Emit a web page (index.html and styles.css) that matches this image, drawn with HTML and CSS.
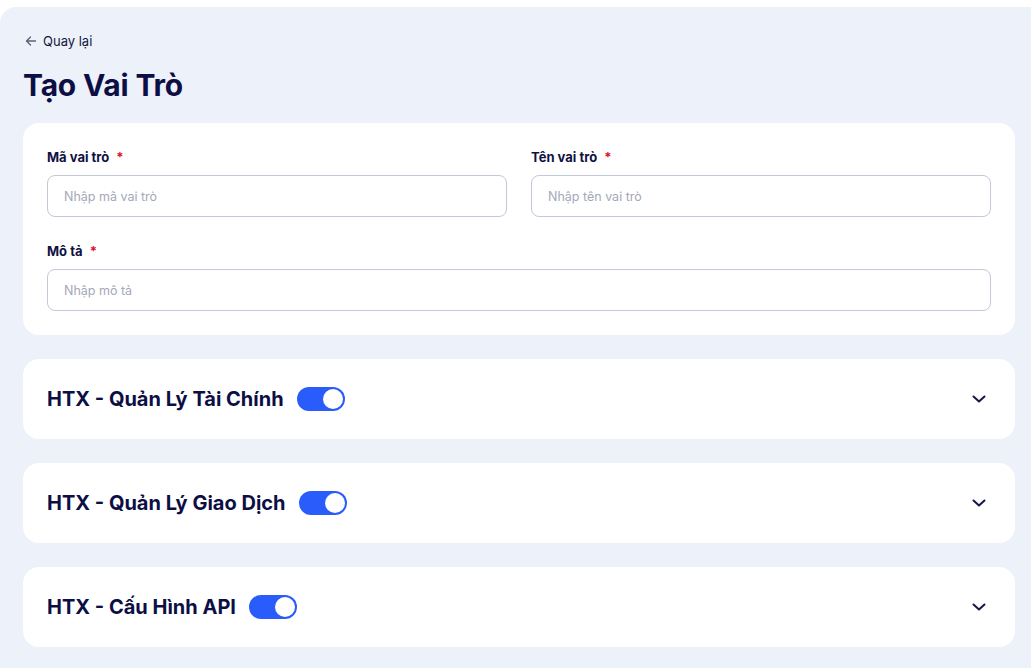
FILE: index.html
```html
<!DOCTYPE html>
<html lang="vi">
<head>
  <meta charset="UTF-8">
  <title>Tạo Vai Trò</title>
  <link rel="stylesheet" href="styles.css">
</head>
<body>

  <main class="panel">
    <!-- quay lại -->
    <a class="back-link" href="#">
      <svg width="12" height="12" viewBox="0 0 12 12" fill="none" stroke="#5b6078" stroke-width="1.3" stroke-linecap="round" stroke-linejoin="round">
        <path d="M10.5 6H1.5M5.5 2L1.5 6l4 4"/>
      </svg>
      <span>Quay lại</span>
    </a>

    <h1 class="page-title">Tạo Vai Trò</h1>

    <!-- thông tin vai trò -->
    <section class="card form-card">
      <div class="form-row">
        <div class="field">
          <label class="field-label">Mã vai trò <span class="req">*</span></label>
          <input class="field-input" type="text" placeholder="Nhập mã vai trò">
        </div>
        <div class="field">
          <label class="field-label">Tên vai trò <span class="req">*</span></label>
          <input class="field-input" type="text" placeholder="Nhập tên vai trò">
        </div>
      </div>
      <div class="field">
        <label class="field-label">Mô tả <span class="req">*</span></label>
        <input class="field-input" type="text" placeholder="Nhập mô tả">
      </div>
    </section>

    <!-- nhóm quyền -->
    <section class="card group-card">
      <div class="group-title">
        <h2>HTX - Quản Lý Tài Chính</h2>
        <span class="toggle on"><span class="knob"></span></span>
      </div>
      <svg class="chevron" width="16" height="16" viewBox="0 0 16 16" fill="none" stroke="#13164a" stroke-width="2" stroke-linecap="round" stroke-linejoin="round">
        <path d="M2.5 5.5L8 10.5l5.5-5"/>
      </svg>
    </section>

    <section class="card group-card">
      <div class="group-title">
        <h2>HTX - Quản Lý Giao Dịch</h2>
        <span class="toggle on"><span class="knob"></span></span>
      </div>
      <svg class="chevron" width="16" height="16" viewBox="0 0 16 16" fill="none" stroke="#13164a" stroke-width="2" stroke-linecap="round" stroke-linejoin="round">
        <path d="M2.5 5.5L8 10.5l5.5-5"/>
      </svg>
    </section>

    <section class="card group-card">
      <div class="group-title">
        <h2>HTX - Cấu Hình API</h2>
        <span class="toggle on"><span class="knob"></span></span>
      </div>
      <svg class="chevron" width="16" height="16" viewBox="0 0 16 16" fill="none" stroke="#13164a" stroke-width="2" stroke-linecap="round" stroke-linejoin="round">
        <path d="M2.5 5.5L8 10.5l5.5-5"/>
      </svg>
    </section>
  </main>

</body>
</html>
```

FILE: styles.css
```css
* {
  box-sizing: border-box;
}

body {
  margin: 0;
  padding-top: 7px;
  background: #ffffff;
  font-family: Inter, 'Noto Sans', sans-serif;
  color: #0f1142;
}

.panel {
  background: #edf1f9;
  border-radius: 16px 0 0 0;
  padding: 24px 16px 24px 23px;
  min-height: 661px;
}

.back-link {
  display: inline-flex;
  align-items: center;
  gap: 6px;
  margin-left: 2px;
  font-size: 13px;
  color: #14173f;
  text-decoration: none;
  height: 20px;
}

.page-title {
  margin: 16px 0 20px;
  font-size: 30px;
  line-height: 36px;
  font-weight: 700;
  letter-spacing: -0.2px;
  color: #0d0f44;
}

.card {
  background: #ffffff;
  border-radius: 16px;
  margin-bottom: 24px;
}

.form-card {
  padding: 24px;
  display: flex;
  flex-direction: column;
  gap: 24px;
}

.form-row {
  display: grid;
  grid-template-columns: 1fr 1fr;
  gap: 24px;
}

.field {
  display: flex;
  flex-direction: column;
  gap: 8px;
}

.field-label {
  font-size: 13px;
  font-weight: 700;
  line-height: 20px;
  color: #0f1142;
}

.req {
  color: #e0112b;
  margin-left: 4px;
}

.field-input {
  height: 42px;
  border: 1px solid #c3c9d6;
  border-radius: 8px;
  padding: 0 16px;
  font-family: inherit;
  font-size: 12.5px;
  color: #0f1142;
  outline: none;
}

.field-input::placeholder {
  color: #a3a8b8;
}

.group-card {
  height: 80px;
  padding: 0 24px;
  display: flex;
  align-items: center;
  justify-content: space-between;
}

.group-title {
  display: flex;
  align-items: center;
  gap: 13px;
}

.group-title h2 {
  margin: 0;
  font-size: 20px;
  font-weight: 700;
  color: #0d0f44;
}

.toggle {
  width: 48px;
  height: 24px;
  border-radius: 12px;
  background: #cfd4e0;
  display: flex;
  align-items: center;
  padding: 2px;
}

.toggle.on {
  background: #2a5cfb;
  justify-content: flex-end;
}

.knob {
  width: 20px;
  height: 20px;
  border-radius: 50%;
  background: #ffffff;
}

.chevron {
  margin-right: 4px;
}
```
